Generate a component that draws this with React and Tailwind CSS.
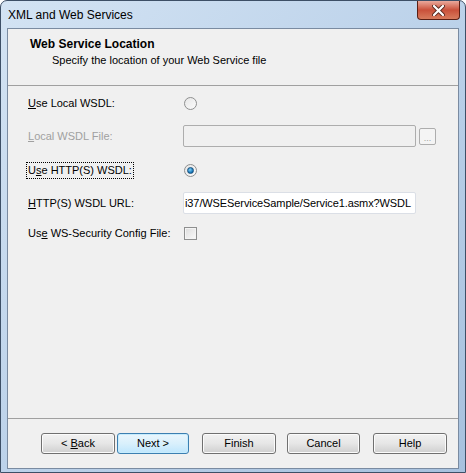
import React from "react";

const font = { fontFamily: '"Liberation Sans", Arial, sans-serif' };

function Radio({ checked }) {
  return (
    <div className="w-[13px] h-[13px] rounded-full border border-[#8e8f8f] bg-gradient-to-br from-[#e6e6e6] to-[#fbfbfb] flex items-center justify-center">
      {checked && (
        <div className="w-[7px] h-[7px] rounded-full border border-[#1a4f7a] bg-[radial-gradient(circle_at_40%_35%,#7fd0f7,#0f6fb3_70%)]" />
      )}
    </div>
  );
}

function Btn({ children, def }) {
  return (
    <button
      className={`w-full h-[21px] rounded-[3px] border text-[11px] text-black flex items-center justify-center ${
        def
          ? "border-[#3c7fb1] bg-gradient-to-b from-[#eaf6fd] via-[#d9f0fc] to-[#bee6fd] shadow-[inset_0_0_0_1px_#c7ecfd]"
          : "border-[#707070] bg-gradient-to-b from-[#f2f2f2] via-[#e6e6e6] to-[#cfcfcf] shadow-[inset_0_0_0_1px_#fbfbfb]"
      }`}
      style={font}
    >
      {children}
    </button>
  );
}

export default function App() {
  return (
    <div
      className="w-[466px] h-[473px] rounded-t-[7px] border border-[#3d4f66] bg-gradient-to-br from-[#d3e3f3] via-[#bcd2ea] to-[#a7c1de] relative flex flex-col"
      style={font}
    >
      {/* Title bar */}
      <div className="h-[27px] flex items-center pl-[7px] text-[12px] text-black">
        XML and Web Services
      </div>
      <div className="absolute right-[5px] top-0 w-[43px] h-[19px] rounded-b-[4px] border border-[#5a1f14] border-t-0 bg-gradient-to-b from-[#e9a99c] via-[#c9503a] to-[#d77b5d] flex items-center justify-center">
        <svg width="13" height="11" viewBox="0 0 13 11">
          <path d="M2 1 L11 10 M11 1 L2 10" stroke="#5a2a20" strokeWidth="4" strokeLinecap="round" />
          <path d="M2 1 L11 10 M11 1 L2 10" stroke="#ffffff" strokeWidth="2.2" strokeLinecap="round" />
        </svg>
      </div>

      {/* Client area */}
      <div className="mx-[6px] mb-[3px] flex-1 border border-[#7a8ba1] bg-[#f0f0f0] flex flex-col">
        {/* Header */}
        <div className="h-[57px] border-b border-[#a0a0a0] pl-[22px] pt-[8px] text-[11px] text-black">
          <div className="font-bold text-[12px] leading-[14px]">Web Service Location</div>
          <div className="pl-[22px] leading-[14px] mt-[2px]">Specify the location of your Web Service file</div>
        </div>

        {/* Body */}
        <div className="flex-1 flex flex-col pl-[20px] text-[11px] text-black">
          <div className="mt-[6px] h-[22px] flex items-center">
            <div className="w-[156px]">
              <span className="underline">U</span>se Local WSDL:
            </div>
            <Radio />
          </div>
          <div className="mt-[11px] h-[22px] flex items-center">
            <div className="w-[155px] text-[#a0a0a0]">
              <span className="underline">L</span>ocal WSDL File:
            </div>
            <div className="w-[233px] h-[22px] border border-[#adadad] rounded-[2px] bg-[#f0f0f0]" />
            <div className="ml-[3px] w-[17px] h-[17px] border border-[#adadad] rounded-[2px] bg-[#f4f4f4] text-[#a0a0a0] text-[9px] flex items-end justify-center leading-[12px]">
              ...
            </div>
          </div>
          <div className="mt-[12px] h-[22px] flex items-center">
            <div className="w-[156px] flex">
              <span className="-ml-[1px] px-[1px] outline-1 outline-dotted outline-black leading-[15px]">
                U<span className="underline">s</span>e HTTP(S) WSDL:
              </span>
            </div>
            <Radio checked />
          </div>
          <div className="mt-[11px] h-[22px] flex items-center">
            <div className="w-[155px]">
              <span className="underline">H</span>TTP(S) WSDL URL:
            </div>
            <div className="w-[233px] h-[22px] border border-[#dbdfe6] rounded-[2px] bg-white flex items-center pl-[1px] whitespace-nowrap text-[11px] tracking-[-0.1px]">
              i37/WSEServiceSample/Service1.asmx?WSDL
            </div>
          </div>
          <div className="mt-[8px] h-[22px] flex items-center">
            <div className="w-[156px]">
              Us<span className="underline">e</span> WS-Security Config File:
            </div>
            <div className="w-[13px] h-[13px] border border-[#8e8f8f] bg-gradient-to-br from-[#dcdcdc] to-[#fbfbfb] shadow-[inset_0_0_0_1px_#f4f4f4]" />
          </div>
        </div>

        {/* Footer */}
        <div className="h-[50px] border-t border-[#a0a0a0] flex items-start pt-[14px] pl-[33px]">
          <div className="w-[74px]">
            <Btn>
              &lt;<span className="underline ml-[3px]">B</span>ack
            </Btn>
          </div>
          <div className="w-[72px] ml-[2px]">
            <Btn def>Next &gt;</Btn>
          </div>
          <div className="w-[74px] ml-[13px]">
            <Btn>Finish</Btn>
          </div>
          <div className="w-[73px] ml-[11px]">
            <Btn>Cancel</Btn>
          </div>
          <div className="w-[74px] ml-[13px]">
            <Btn>Help</Btn>
          </div>
        </div>
      </div>
    </div>
  );
}
